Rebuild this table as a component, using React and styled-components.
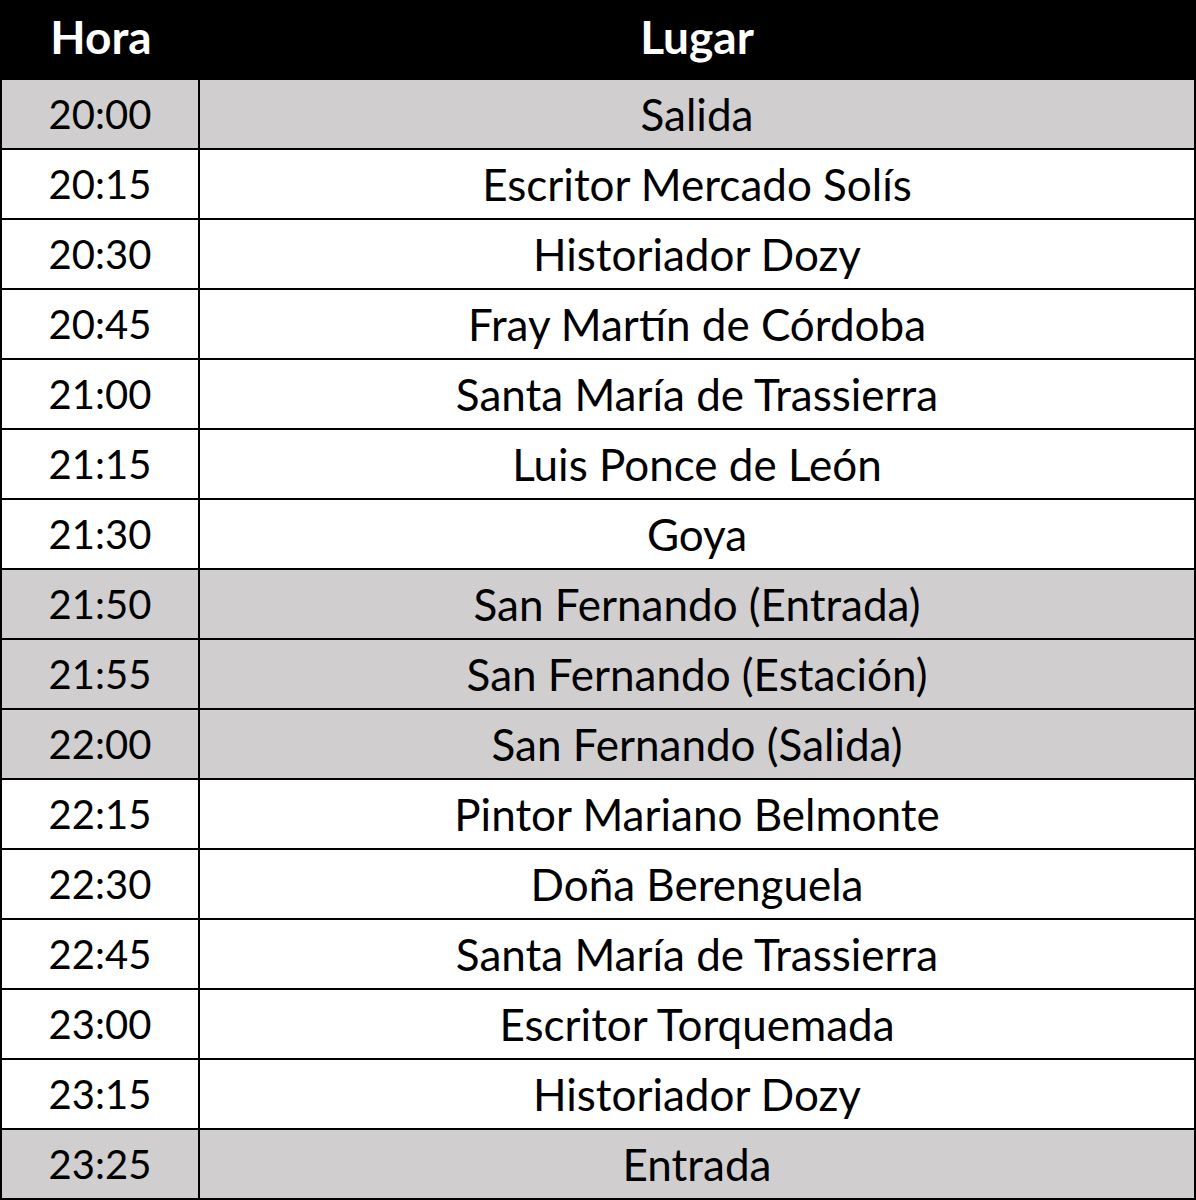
import React from "react";
import styled, { createGlobalStyle } from "styled-components";

const Global = createGlobalStyle`
  html, body { margin: 0; padding: 0; background: #ffffff; }
  * { box-sizing: border-box; }
`;

const Table = styled.div`
  width: 1196px;
  border-left: 2px solid #000;
  border-right: 2px solid #000;
  border-bottom: 2px solid #000;
  font-family: "Lato", "Open Sans", sans-serif;
  color: #000;
`;

const Header = styled.div`
  display: grid;
  grid-template-columns: 198px 1fr;
  height: 78px;
  background: #000;
  color: #fff;
  font-weight: 700;
  font-size: 46px;
`;

const Row = styled.div`
  display: grid;
  grid-template-columns: 198px 1fr;
  height: 70px;
  border-top: 2px solid #000;
  background: ${(p) => (p.$shaded ? "#d0cece" : "#ffffff")};
`;

const Cell = styled.div`
  display: flex;
  align-items: center;
  justify-content: center;
  border-right: ${(p) => (p.$first ? "2px solid #000" : "none")};
  padding-bottom: ${(p) => (p.$head ? "6px" : "0")};
  font-size: ${(p) => (p.$head ? "inherit" : p.$first ? "40px" : "44px")};
  white-space: nowrap;
`;

const rows = [
  ["20:00", "Salida", true],
  ["20:15", "Escritor Mercado Solís"],
  ["20:30", "Historiador Dozy"],
  ["20:45", "Fray Martín de Córdoba"],
  ["21:00", "Santa María de Trassierra"],
  ["21:15", "Luis Ponce de León"],
  ["21:30", "Goya"],
  ["21:50", "San Fernando (Entrada)", true],
  ["21:55", "San Fernando (Estación)", true],
  ["22:00", "San Fernando (Salida)", true],
  ["22:15", "Pintor Mariano Belmonte"],
  ["22:30", "Doña Berenguela"],
  ["22:45", "Santa María de Trassierra"],
  ["23:00", "Escritor Torquemada"],
  ["23:15", "Historiador Dozy"],
  ["23:25", "Entrada", true],
];

export default function App() {
  return (
    <>
      <Global />
      <Table>
        <Header>
          <Cell $head>Hora</Cell>
          <Cell $head>Lugar</Cell>
        </Header>
        {rows.map(([t, l, s]) => (
          <Row key={t} $shaded={!!s}>
            <Cell $first>{t}</Cell>
            <Cell>{l}</Cell>
          </Row>
        ))}
      </Table>
    </>
  );
}
